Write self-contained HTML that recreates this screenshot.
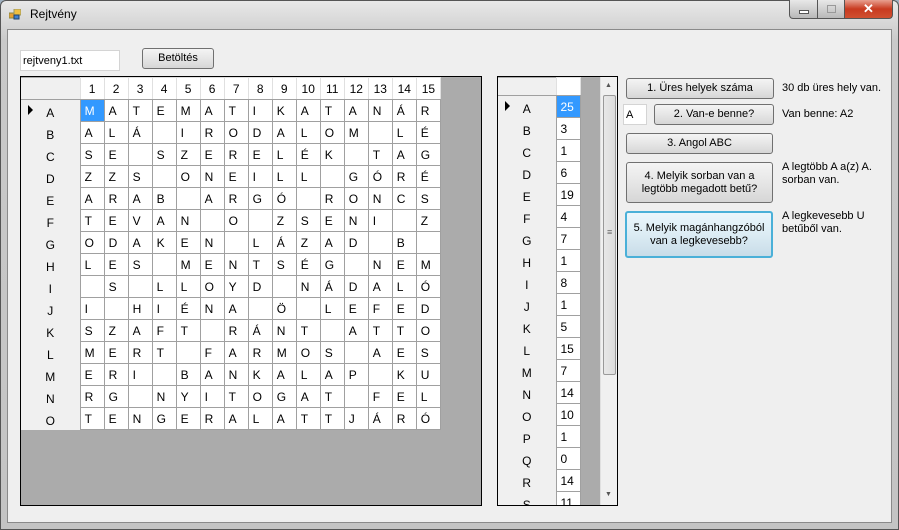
<!DOCTYPE html>
<html><head><meta charset="utf-8"><style>
*{margin:0;padding:0;box-sizing:border-box}
body{width:899px;height:530px;overflow:hidden;background:#9fb0c0;font-family:"Liberation Sans",sans-serif;font-size:12px;color:#000;position:relative}
.frame{position:absolute;left:0;top:0;width:899px;height:530px;background:linear-gradient(#e8e8e8,#c9c9c9 40px,#c4c4c4);border:1px solid #555;border-radius:6px 6px 0 0}
.title{position:absolute;left:30px;top:7px;font-size:12px}
.icon{position:absolute;left:9px;top:9px;width:12px;height:11px}
.client{position:absolute;left:7px;top:29px;width:885px;height:494px;background:#efefef;border:1px solid #8a8a8a}
.wc{position:absolute;top:0;height:19px;border:1px solid #555;border-top:none}
.a{position:absolute}
.lbl{position:absolute;font-size:11px;line-height:13px}
.btn{position:absolute;background:linear-gradient(#f4f4f4,#e6e6e6 50%,#d6d6d6);border:1px solid #707070;border-radius:3px;text-align:center;font-size:11px;line-height:13px;display:flex;align-items:center;justify-content:center}
.tb{position:absolute;background:#fff;border:1px solid #d4d4d4;padding:4px 2px;font-size:11px}
table{border-collapse:collapse;table-layout:fixed;position:absolute}
td{height:22px;padding:0 0 0 4px;font-size:12px;white-space:nowrap;overflow:hidden}
.g td{border:1px solid #a0a0a0;background:#fff}
.g td.rh{border:none;border-right:1px solid #a0a0a0;background:#f0f0f0;text-align:center;padding:4px 0 0 0}
.g tr.h td{background:#fff;border:1px solid #e0e0e0;border-bottom:1px solid #a0a0a0;text-align:center;padding:0}
.g tr.h td.rh{background:#f0f0f0;border:none;border-bottom:1px solid #a0a0a0}
.sel{background:#3399ff!important;color:#fff}
.arr{position:absolute;width:0;height:0;border-top:5px solid transparent;border-bottom:5px solid transparent;border-left:5px solid #000}
</style></head><body>
<div class="frame"></div>
<svg class="icon" viewBox="0 0 12 11"><rect x="0" y="4" width="5" height="5" fill="#e8a030" stroke="#884"/><rect x="5" y="0" width="7" height="6" fill="#f0c040" stroke="#996"/><rect x="5" y="6" width="5" height="4" fill="#4080d0" stroke="#246"/></svg>
<div class="title">Rejtvény</div>
<div class="wc" style="left:789px;width:29px;background:linear-gradient(#e8e8e8,#b8b8b8);border-radius:0 0 0 4px"><div style="position:absolute;left:9px;top:10px;width:10px;height:4px;background:#fff;border:1px solid #555"></div></div>
<div class="wc" style="left:817px;width:28px;background:linear-gradient(#e8e8e8,#b8b8b8)"><div style="position:absolute;left:9px;top:5px;width:9px;height:8px;border:1px solid #999"></div></div>
<div class="wc" style="left:844px;width:49px;background:linear-gradient(#e8a090,#c83a20 50%,#d05030);border-radius:0 0 4px 0;color:#fff;text-align:center;font-weight:bold;font-size:13px;line-height:17px">✕</div>
<div class="client"></div>

<div class="tb" style="left:20px;top:50px;width:100px;height:21px">rejtveny1.txt</div>
<div class="btn" style="left:142px;top:48px;width:72px;height:21px">Betöltés</div>

<div class="a" style="left:20px;top:76px;width:462px;height:430px;background:#ababab;border:1px solid #000"></div>
<table class="g" style="left:21px;top:77px;width:420px">
<colgroup><col style="width:59px"><col span="15" style="width:24px"></colgroup>
<tr class="h"><td class="rh"></td><td>1</td><td>2</td><td>3</td><td>4</td><td>5</td><td>6</td><td>7</td><td>8</td><td>9</td><td>10</td><td>11</td><td>12</td><td>13</td><td>14</td><td>15</td></tr>
<tr><td class="rh">A</td><td class="sel">M</td><td>A</td><td>T</td><td>E</td><td>M</td><td>A</td><td>T</td><td>I</td><td>K</td><td>A</td><td>T</td><td>A</td><td>N</td><td>Á</td><td>R</td></tr>
<tr><td class="rh">B</td><td>A</td><td>L</td><td>Á</td><td></td><td>I</td><td>R</td><td>O</td><td>D</td><td>A</td><td>L</td><td>O</td><td>M</td><td></td><td>L</td><td>É</td></tr>
<tr><td class="rh">C</td><td>S</td><td>E</td><td></td><td>S</td><td>Z</td><td>E</td><td>R</td><td>E</td><td>L</td><td>É</td><td>K</td><td></td><td>T</td><td>A</td><td>G</td></tr>
<tr><td class="rh">D</td><td>Z</td><td>Z</td><td>S</td><td></td><td>O</td><td>N</td><td>E</td><td>I</td><td>L</td><td>L</td><td></td><td>G</td><td>Ó</td><td>R</td><td>É</td></tr>
<tr><td class="rh">E</td><td>A</td><td>R</td><td>A</td><td>B</td><td></td><td>A</td><td>R</td><td>G</td><td>Ó</td><td></td><td>R</td><td>O</td><td>N</td><td>C</td><td>S</td></tr>
<tr><td class="rh">F</td><td>T</td><td>E</td><td>V</td><td>A</td><td>N</td><td></td><td>O</td><td></td><td>Z</td><td>S</td><td>E</td><td>N</td><td>I</td><td></td><td>Z</td></tr>
<tr><td class="rh">G</td><td>O</td><td>D</td><td>A</td><td>K</td><td>E</td><td>N</td><td></td><td>L</td><td>Á</td><td>Z</td><td>A</td><td>D</td><td></td><td>B</td><td></td></tr>
<tr><td class="rh">H</td><td>L</td><td>E</td><td>S</td><td></td><td>M</td><td>E</td><td>N</td><td>T</td><td>S</td><td>É</td><td>G</td><td></td><td>N</td><td>E</td><td>M</td></tr>
<tr><td class="rh">I</td><td></td><td>S</td><td></td><td>L</td><td>L</td><td>O</td><td>Y</td><td>D</td><td></td><td>N</td><td>Á</td><td>D</td><td>A</td><td>L</td><td>Ó</td></tr>
<tr><td class="rh">J</td><td>I</td><td></td><td>H</td><td>I</td><td>É</td><td>N</td><td>A</td><td></td><td>Ö</td><td></td><td>L</td><td>E</td><td>F</td><td>E</td><td>D</td></tr>
<tr><td class="rh">K</td><td>S</td><td>Z</td><td>A</td><td>F</td><td>T</td><td></td><td>R</td><td>Á</td><td>N</td><td>T</td><td></td><td>A</td><td>T</td><td>T</td><td>O</td></tr>
<tr><td class="rh">L</td><td>M</td><td>E</td><td>R</td><td>T</td><td></td><td>F</td><td>A</td><td>R</td><td>M</td><td>O</td><td>S</td><td></td><td>A</td><td>E</td><td>S</td></tr>
<tr><td class="rh">M</td><td>E</td><td>R</td><td>I</td><td></td><td>B</td><td>A</td><td>N</td><td>K</td><td>A</td><td>L</td><td>A</td><td>P</td><td></td><td>K</td><td>U</td></tr>
<tr><td class="rh">N</td><td>R</td><td>G</td><td></td><td>N</td><td>Y</td><td>I</td><td>T</td><td>O</td><td>G</td><td>A</td><td>T</td><td></td><td>F</td><td>E</td><td>L</td></tr>
<tr><td class="rh">O</td><td>T</td><td>E</td><td>N</td><td>G</td><td>E</td><td>R</td><td>A</td><td>L</td><td>A</td><td>T</td><td>T</td><td>J</td><td>Á</td><td>R</td><td>Ó</td></tr>
</table>
<div class="arr" style="left:28px;top:105px"></div>

<div class="a" style="left:497px;top:76px;width:121px;height:430px;background:#ababab;border:1px solid #000;overflow:hidden">
<table class="g" style="left:0;top:0;width:82px">
<colgroup><col style="width:58px"><col style="width:24px"></colgroup>
<tr class="h"><td class="rh" style="height:18px"></td><td style="height:18px"></td></tr>
<tr><td class="rh">A</td><td class="sel">25</td></tr>
<tr><td class="rh">B</td><td>3</td></tr>
<tr><td class="rh">C</td><td>1</td></tr>
<tr><td class="rh">D</td><td>6</td></tr>
<tr><td class="rh">E</td><td>19</td></tr>
<tr><td class="rh">F</td><td>4</td></tr>
<tr><td class="rh">G</td><td>7</td></tr>
<tr><td class="rh">H</td><td>1</td></tr>
<tr><td class="rh">I</td><td>8</td></tr>
<tr><td class="rh">J</td><td>1</td></tr>
<tr><td class="rh">K</td><td>5</td></tr>
<tr><td class="rh">L</td><td>15</td></tr>
<tr><td class="rh">M</td><td>7</td></tr>
<tr><td class="rh">N</td><td>14</td></tr>
<tr><td class="rh">O</td><td>10</td></tr>
<tr><td class="rh">P</td><td>1</td></tr>
<tr><td class="rh">Q</td><td>0</td></tr>
<tr><td class="rh">R</td><td>14</td></tr>
<tr><td class="rh">S</td><td>11</td></tr>
</table>
<div class="a" style="left:102px;top:0;width:17px;height:428px;background:#f0f0f0;border-left:1px solid #e0e0e0">
<div class="a" style="left:4px;top:5px;font-size:7px;color:#555">▲</div>
<div class="a" style="left:2px;top:18px;width:13px;height:280px;background:linear-gradient(90deg,#e8e8e8,#dcdcdc);border:1px solid #999;border-radius:2px"><div class="a" style="left:3px;top:134px;font-size:9px;color:#666;line-height:4px">≡</div></div>
<div class="a" style="left:4px;top:414px;font-size:7px;color:#555">▼</div>
</div>
</div>
<div class="arr" style="left:505px;top:101px"></div>

<div class="btn" style="left:626px;top:78px;width:148px;height:21px">1. Üres helyek száma</div>
<div class="lbl" style="left:782px;top:82px">30 db üres hely van.</div>
<div class="tb" style="left:623px;top:104px;width:24px;height:21px">A</div>
<div class="btn" style="left:654px;top:104px;width:120px;height:21px">2. Van-e benne?</div>
<div class="lbl" style="left:782px;top:108px">Van benne: A2</div>
<div class="btn" style="left:626px;top:133px;width:147px;height:21px">3. Angol ABC</div>
<div class="btn" style="left:626px;top:162px;width:147px;height:41px">4. Melyik sorban van a<br>legtöbb megadott betű?</div>
<div class="lbl" style="left:782px;top:161px">A legtöbb A a(z) A.<br>sorban van.</div>
<div class="btn" style="left:625px;top:211px;width:148px;height:47px;border:2px solid #4ab0d8;background:linear-gradient(#eaf6fc,#dcecf4 50%,#c8dce8)">5. Melyik magánhangzóból<br>van a legkevesebb?</div>
<div class="lbl" style="left:782px;top:210px">A legkevesebb U<br>betűből van.</div>
</body></html>
